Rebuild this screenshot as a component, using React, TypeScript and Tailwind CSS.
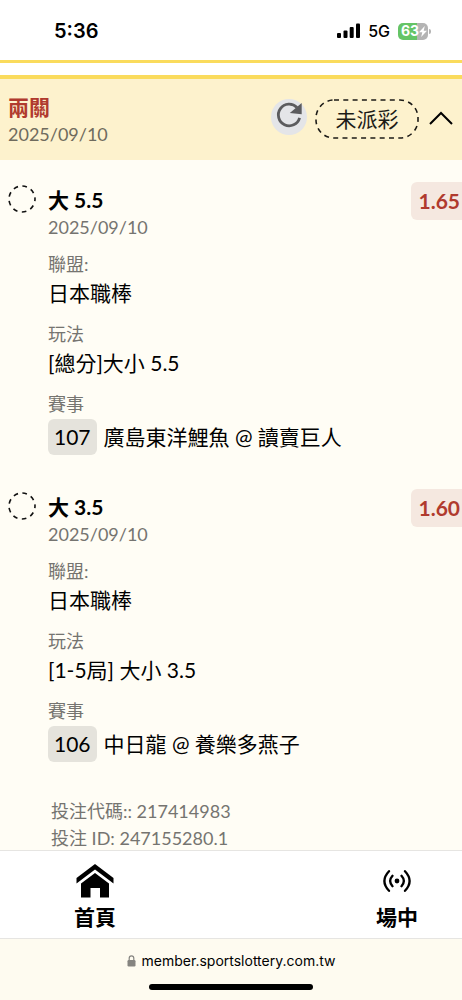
import React from "react";

type Selection = {
  id: string;
  title: string;
  date: string;
  odds: string;
  league: string;
  market: string;
  code: string;
  match: string;
};

const selections: Selection[] = [
  {
    id: "a",
    title: "大 5.5",
    date: "2025/09/10",
    odds: "1.65",
    league: "日本職棒",
    market: "[總分]大小 5.5",
    code: "107",
    match: "廣島東洋鯉魚 @ 讀賣巨人",
  },
  {
    id: "b",
    title: "大 3.5",
    date: "2025/09/10",
    odds: "1.60",
    league: "日本職棒",
    market: "[1-5局] 大小 3.5",
    code: "106",
    match: "中日龍 @ 養樂多燕子",
  },
];

function StatusBar() {
  return (
    <div className="flex h-[60px] items-center justify-between bg-white pr-[34px] pl-[54px] pt-0.5 font-['Inter','Liberation_Sans',sans-serif] text-black">
      <span className="text-xl leading-6 font-semibold">5:36</span>
      <div className="flex items-center">
        <svg className="h-4 w-6" viewBox="0 0 24 16" aria-hidden="true">
          <rect x="0" y="10" width="4" height="5" rx="1" />
          <rect x="6.5" y="7.5" width="4" height="7.5" rx="1" />
          <rect x="12.7" y="4" width="4" height="11" rx="1" />
          <rect x="19" y="0.5" width="4" height="14.5" rx="1" />
        </svg>
        <span className="ml-[7px] text-base leading-5 font-medium">5G</span>
        <div className="relative ml-2 flex h-[17px] w-[30px] items-center rounded-[5px] bg-linear-to-r from-[#65c466] from-63% to-[#b4b4b4] to-63% pl-[3px]">
          <span className="text-sm leading-4 font-bold text-white">63</span>
          <svg className="h-[11px] w-2" viewBox="0 0 8 11" fill="#fff" aria-hidden="true">
            <path d="M5.8 0 0 6.2h3.3L2.2 11 8 4.7H4.7z" />
          </svg>
          <span className="absolute top-[6px] -right-[3px] h-[5px] w-[2px] rounded-r bg-[#b4b4b4]" />
        </div>
      </div>
    </div>
  );
}

function TicketHeader() {
  return (
    <header className="flex items-start justify-between border-t-4 border-[#fadb5c] bg-[#fdf2cd] pt-[15px] pr-[9px] pb-3 pl-2">
      <div>
        <h1 className="text-[21px] leading-[26px] font-bold text-[#b03a2e]">兩關</h1>
        <p className="text-lg leading-7 text-[#6f6b5d]">2025/09/10</p>
      </div>
      <div className="flex items-center pt-[5px]">
        <button
          type="button"
          aria-label="重新整理"
          className="-mt-1 flex size-9 items-center justify-center rounded-full bg-[#e4e5e8]"
        >
          <svg className="size-9" viewBox="0 0 36 36" fill="none" aria-hidden="true">
            <path d="M28.600 18.800A10.800 10.800 0 1 1 26 8.500" stroke="#5c5c5e" strokeWidth="2.800" />
            <path d="M30.700 4V15.200L18.800 14z" fill="#5c5c5e" />
          </svg>
        </button>
        <span className="relative ml-2 flex h-10 w-26 items-center justify-center text-[21px] leading-7 text-[#1c1b17]">
          <svg className="absolute inset-0 size-full" viewBox="0 0 104 40" fill="none" aria-hidden="true">
            <rect x="1" y="1" width="102" height="38" rx="18" stroke="#1c1b17" strokeWidth="1.6" strokeDasharray="5 4.3" />
          </svg>
          未派彩
        </span>
        <button type="button" aria-label="收合" className="ml-2.5 flex h-9 w-6 items-center justify-center">
          <svg className="h-4 w-6" viewBox="0 0 24 16" fill="none" aria-hidden="true">
            <path d="M1 13 12 2l11 11" stroke="#000" strokeWidth="2" />
          </svg>
        </button>
      </div>
    </header>
  );
}

function Field({ label, children }: { label: string; children: React.ReactNode }) {
  return (
    <div>
      <dt className="text-lg leading-[26px] text-[#757470]">{label}</dt>
      <dd className="text-[21px] leading-8 text-black">{children}</dd>
    </div>
  );
}

function SelectionCard({ item }: { item: Selection }) {
  return (
    <article className="flex items-start pl-2">
      <svg className="-mt-px size-7 shrink-0" viewBox="0 0 28 28" fill="none" aria-hidden="true">
        <circle cx="14" cy="14" r="13" stroke="#111" strokeWidth="1.6" strokeDasharray="4.6 4.48" strokeDashoffset="2.3" />
      </svg>
      <div className="ml-3 min-w-0 flex-1">
        <h2 className="text-[21px] leading-7 font-bold text-black">{item.title}</h2>
        <p className="text-lg leading-[26px] text-[#757470]">{item.date}</p>
        <dl className="mt-[11px] flex flex-col gap-3">
          <Field label="聯盟:">{item.league}</Field>
          <Field label="玩法">{item.market}</Field>
          <Field label="賽事">
            <span className="mt-0.5 flex items-center gap-[7px]">
              <span className="rounded-md bg-[#e5e3dc] px-1.5 py-0.5">{item.code}</span>
              {item.match}
            </span>
          </Field>
        </dl>
      </div>
      <span className="-mt-1 rounded-l-md bg-[#f5e8e0] py-[5px] pr-0.5 pl-[7px] text-[21px] leading-7 font-bold text-[#b03a2e]">
        {item.odds}
      </span>
    </article>
  );
}

function BottomNav() {
  return (
    <nav className="flex h-[89px] justify-between border-y border-[#e6e5e2] bg-white pr-[23px] pl-[53px] text-[21px] leading-7 font-bold text-black">
      <a href="#home" className="flex w-[84px] flex-col items-center pt-3">
        <svg className="h-[38px] w-10" viewBox="0 0 40 38" aria-hidden="true">
          <path d="M20 1 38.5 15v5.5L20 6.500 1.500 20.500V15z" />
          <path d="M20 10 34 20.500V34.500H25V25H15.500V34.500H6V20.500z" />
        </svg>
        <span className="mt-0.5">首頁</span>
      </a>
      <a href="#live" className="flex w-[84px] flex-col items-center pt-3">
        <svg className="h-[38px] w-8" viewBox="0 0 32 38" fill="none" stroke="#000" strokeWidth="2.3" strokeLinecap="round" aria-hidden="true">
          <circle cx="16" cy="18" r="2.4" fill="#000" stroke="none" />
          <path d="M11.500 12.800Q6.800 18 11.500 23.200M20.500 12.800Q25.200 18 20.500 23.200M8 8.200Q-1.200 18 8 27.800M24 8.200Q33.200 18 24 27.800" />
        </svg>
        <span className="mt-0.5">場中</span>
      </a>
    </nav>
  );
}

function BrowserBar() {
  return (
    <div className="flex h-[61px] flex-col items-center justify-between bg-[#fefbf0] pt-3 pb-2.5">
      <div className="flex items-center gap-1.5 font-['Inter','Liberation_Sans',sans-serif] text-sm leading-5 text-black">
        <svg className="h-3 w-[9px]" viewBox="0 0 9 12" aria-hidden="true">
          <rect x="0.500" y="5" width="8" height="6.500" rx="1.200" fill="#858480" />
          <path d="M2.200 5.500V3.200a2.300 2.300 0 0 1 4.600 0V5.500" fill="none" stroke="#858480" strokeWidth="1.200" />
        </svg>
        member.sportslottery.com.tw
      </div>
      <div className="h-1.5 w-[164px] rounded-full bg-black" />
    </div>
  );
}

export default function App() {
  return (
    <div className="flex min-h-screen flex-col bg-[#fffdf5] font-['Lato','Noto_Sans_CJK_TC',sans-serif]">
      <StatusBar />
      <div className="h-[15px] border-t-3 border-[#fadb5c] bg-white" />
      <TicketHeader />
      <main className="flex-1 pt-[26px]">
        <div className="flex flex-col gap-[38px]">
          {selections.map((item) => (
            <SelectionCard key={item.id} item={item} />
          ))}
        </div>
        <div className="mt-9 pl-[51px] text-lg leading-[27px] text-[#757470]">
          <p>投注代碼:: 217414983</p>
          <p className="-mb-1">投注 ID: 247155280.1</p>
        </div>
      </main>
      <div className="sticky bottom-0">
        <BottomNav />
        <BrowserBar />
      </div>
    </div>
  );
}
